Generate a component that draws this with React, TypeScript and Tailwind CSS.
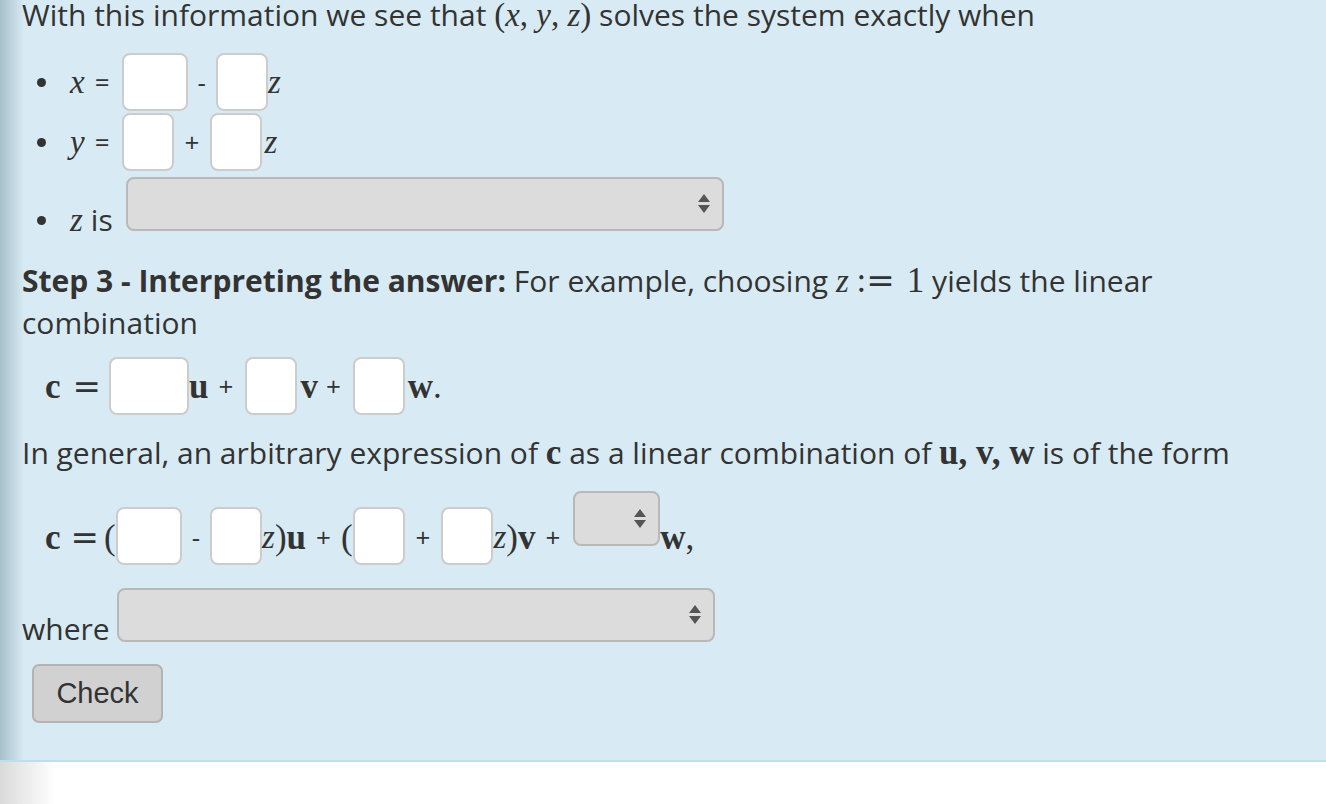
import React from "react";

const sans = "font-['Open_Sans',sans-serif]";
const serif = "font-['Liberation_Serif',serif]";
const eqFont = "font-['DejaVu_Serif',serif]";

const Box = ({ w = 52 }: { w?: number }) => (
  <input
    type="text"
    style={{ width: w }}
    className="h-[58px] shrink-0 rounded-[8px] border-2 border-[#cccccc] bg-white outline-none"
  />
);

const Arrows = () => (
  <svg width="14" height="22" viewBox="0 0 14 22" className="shrink-0">
    <path d="M7 1 L13 9 L1 9 Z" fill="#555" />
    <path d="M1 12 L13 12 L7 20 Z" fill="#555" />
  </svg>
);

const Select = ({ w, h = 54 }: { w: number; h?: number }) => (
  <div
    style={{ width: w, height: h }}
    className="flex shrink-0 items-center justify-end rounded-[8px] border-2 border-[#b8b8b8] bg-[#dcdcdc] pr-[11px]"
  >
    <Arrows />
  </div>
);

const Dot = () => <span className="mr-[24px] h-[9px] w-[9px] shrink-0 rounded-full bg-[#333]" />;

const Var = ({ c }: { c: string }) => <span className={`${serif} italic text-[33px] leading-none`}>{c}</span>;
const Vec = ({ c }: { c: string }) => <span className={`${serif} font-bold text-[35px] leading-none`}>{c}</span>;
const Eq = () => <span className={`${eqFont} text-[34px] font-light leading-none`}>=</span>;
const Paren = ({ c }: { c: string }) => <span className={`${serif} text-[35px] leading-none`}>{c}</span>;

export default function App() {
  return (
    <div className={`h-[804px] w-[1326px] overflow-hidden bg-white text-[30px] text-[#333] ${sans}`}>
      <div className="flow-root h-[762px] border-b-2 border-[#b8e1ea] bg-[linear-gradient(to_right,#a8bfca_0px,#d8ebf4_24px)] pl-[22px]">
        <p className="mt-[-5px] h-[40px] leading-[40px]">
          With this information we see that{" "}
          <span className={`${serif} text-[33px]`}>
            (<i>x</i>, <i>y</i>, <i>z</i>)
          </span>{" "}
          solves the system exactly when
        </p>

        <div className="mt-[18px] pl-[15px]">
          <div className="flex h-[58px] items-center">
            <Dot />
            <Var c="x" />
            <span className="ml-[10px] text-[26px]">=</span>
            <span className="ml-[12px]" />
            <Box w={66} />
            <span className="mx-[10px] text-[26px]">-</span>
            <Box w={52} />
            <Var c="z" />
          </div>
          <div className="mt-[2px] flex h-[58px] items-center">
            <Dot />
            <Var c="y" />
            <span className="ml-[10px] text-[26px]">=</span>
            <span className="ml-[12px]" />
            <Box w={52} />
            <span className="mx-[11px] text-[26px]">+</span>
            <Box w={52} />
            <span className="ml-[2px]" />
            <Var c="z" />
          </div>
          <div className="mt-[6px] flex h-[63px] items-start">
            <div className="mt-[25px] flex h-[36px] items-center leading-[36px]">
              <Dot />
              <Var c="z" />
              <span className="ml-[8px]">is</span>
            </div>
            <div className="ml-[13px]">
              <Select w={598} />
            </div>
          </div>
        </div>

        <p className="mt-[20px] w-[1200px] leading-[42px]">
          <b>Step 3 - Interpreting the answer:</b> For example, choosing <Var c="z" />{" "}
          <span className={`${serif} text-[35px]`}>:</span>
          <Eq />
          <span className={`${serif} ml-[12px] text-[35px]`}>1</span> yields the linear combination
        </p>

        <div className="mt-[13px] flex h-[58px] items-center pl-[23px]">
          <Vec c="c" />
          <span className="ml-[12px] mr-[8px]">
            <Eq />
          </span>
          <Box w={80} />
          <Vec c="u" />
          <span className="ml-[10px] mr-[12px] text-[26px]">+</span>
          <Box w={52} />
          <span className="ml-[3px]" />
          <Vec c="v" />
          <span className="ml-[8px] mr-[12px] text-[26px]">+</span>
          <Box w={52} />
          <span className="ml-[3px]" />
          <Vec c="w" />
          <Paren c="." />
        </div>

        <p className="mt-[17px] leading-[42px]">
          In general, an arbitrary expression of <Vec c="c" /> as a linear combination of{" "}
          <span className={`${serif} font-bold text-[35px]`}>u, v, w</span> is of the form
        </p>

        <div className="mt-[17px] flex h-[74px] pl-[23px]">
          <div className="flex h-full items-end">
            <div className="mb-[10px] flex h-[36px] items-center">
              <Vec c="c" />
              <span className="ml-[10px] mr-[5px]">
                <Eq />
              </span>
              <Paren c="(" />
            </div>
            <Box w={66} />
            <span className="mx-[10px] mb-[10px] text-[26px] leading-[36px]">-</span>
            <Box w={52} />
            <div className="mb-[10px] flex h-[36px] items-center">
              <Var c="z" />
              <Paren c=")" />
              <Vec c="u" />
              <span className="ml-[10px] mr-[10px] text-[26px]">+</span>
              <Paren c="(" />
            </div>
            <Box w={52} />
            <span className="mx-[11px] mb-[10px] text-[26px] leading-[36px]">+</span>
            <Box w={52} />
            <div className="mb-[10px] flex h-[36px] items-center">
              <Var c="z" />
              <Paren c=")" />
              <Vec c="v" />
              <span className="ml-[10px] mr-[13px] text-[26px]">+</span>
            </div>
          </div>
          <div className="flex h-full items-start">
            <Select w={87} h={55} />
          </div>
          <div className="flex h-full items-end">
            <div className="mb-[10px] flex h-[36px] items-center">
              <Vec c="w" />
              <Paren c="," />
            </div>
          </div>
        </div>

        <div className="mt-[23px] flex items-end">
          <span className="h-[36px] leading-[36px]">where</span>
          <div className="mb-[5px] ml-[7px]">
            <Select w={598} />
          </div>
        </div>

        <button className="ml-[10px] mt-[17px] h-[59px] w-[131px] rounded-[7px] border-2 border-[#b3b3b3] bg-[#d1d1d1] font-['Liberation_Sans',sans-serif] text-[29px] text-[#333]">
          Check
        </button>
      </div>
      <div className="h-[42px] bg-[linear-gradient(to_right,#dadada,#ffffff_55px)]" />
    </div>
  );
}
